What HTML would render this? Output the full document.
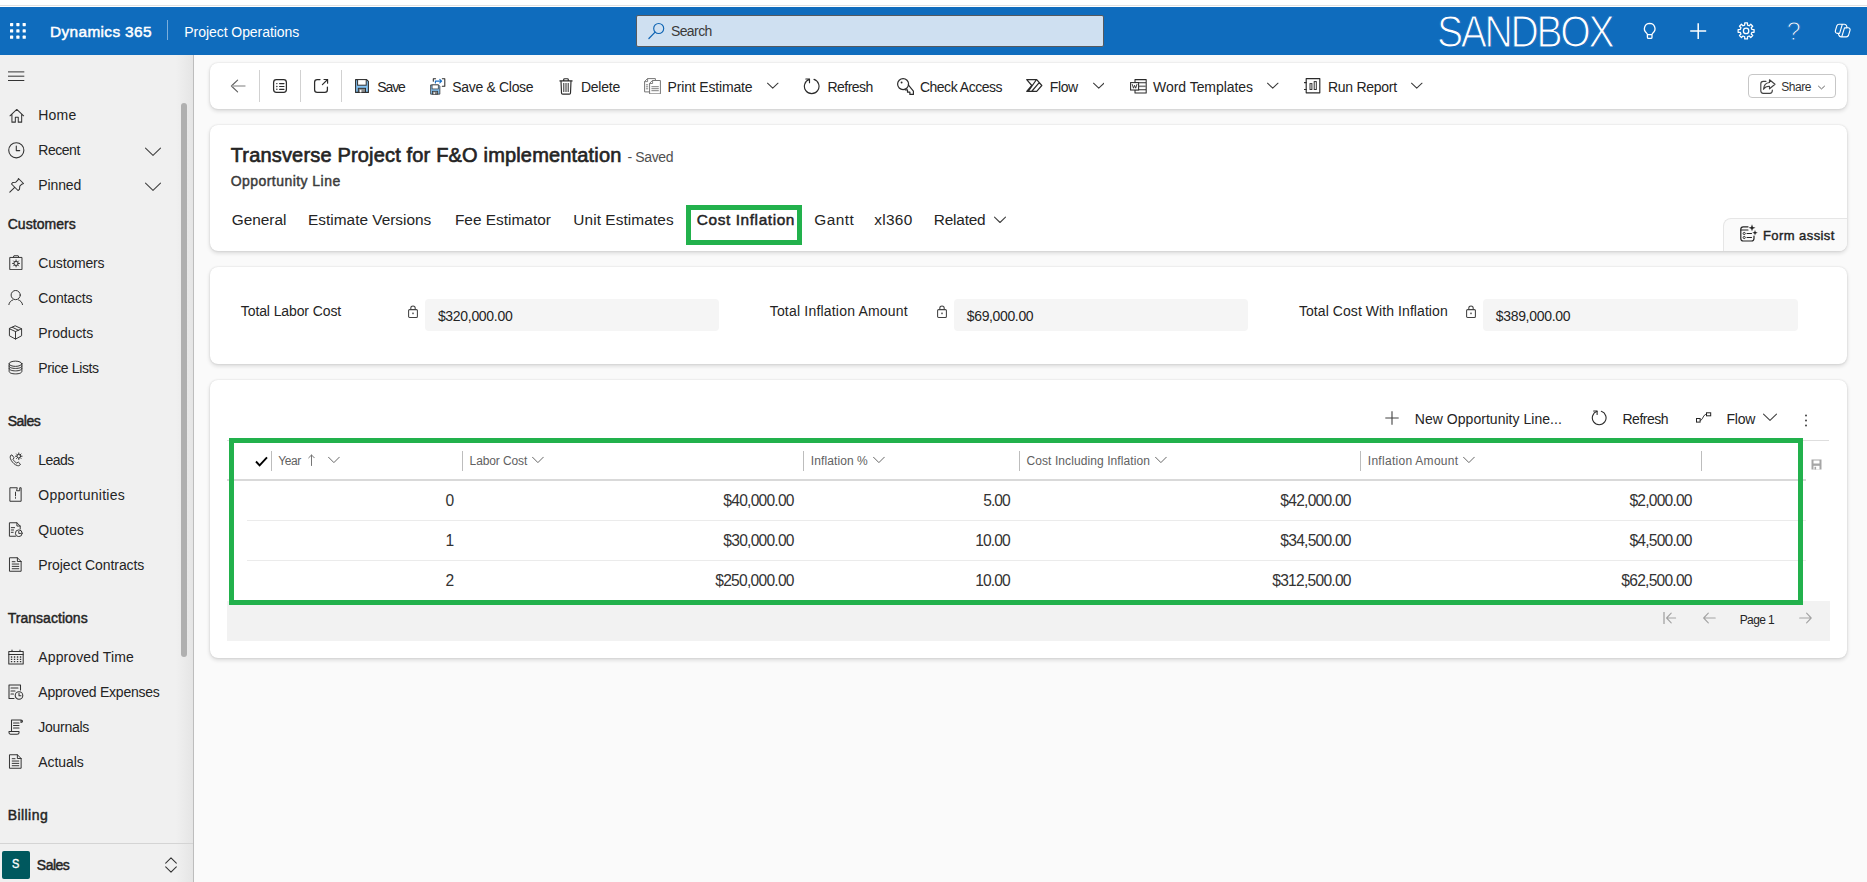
<!DOCTYPE html>
<html lang="en"><head><meta charset="utf-8"><title>Opportunity Line: Transverse Project for F&amp;O implementation - Dynamics 365</title>
<style>
html,body{margin:0;padding:0}
body{width:1867px;height:882px;overflow:hidden;position:relative;background:#fafafa;font-family:"Liberation Sans", sans-serif;color:#242424}
#app{position:absolute;left:0;top:0;width:1867px;height:882px;overflow:hidden}
#app div,#app svg,#app span{position:absolute;box-sizing:border-box}
#app span{white-space:nowrap;line-height:20px;display:block}
.card{background:#fff;border-radius:8px;box-shadow:0 0 2px rgba(0,0,0,.12),0 2px 4px rgba(0,0,0,.14)}

</style></head><body><div id="app">
<div style="left:0px;top:0px;width:1867px;height:7px;background:#ffffff;"></div>
<div style="left:0px;top:5px;width:1867px;height:1px;background:#e0e0e0;"></div>
<div style="left:0px;top:7px;width:1867px;height:48px;background:#0f6cbd;"></div>
<div style="left:167px;top:20px;width:1px;height:20px;background:rgba(255,255,255,.45);"></div>
<div style="left:636px;top:15px;width:468px;height:32px;background:#cfe0f1;border:1px solid #55595e;border-radius:2px;"></div>
<div style="left:0px;top:55px;width:194px;height:827px;background:linear-gradient(to right,#f0f0f0 0,#f0f0f0 176px,#e5e5e5 193px);border-right:1px solid #bdbdbd;"></div>
<div style="left:181px;top:103px;width:6px;height:554px;background:#b0b0b0;border-radius:3px;"></div>
<div style="left:0px;top:843px;width:193px;height:39px;background:linear-gradient(to right,#f0f0f0 0,#f0f0f0 176px,#e5e5e5 193px);border-top:1px solid #d4d4d4;"></div>
<div style="left:2px;top:851px;width:28px;height:28px;background:#00585e;border-radius:2px;"></div>
<div class="card" style="left:210px;top:63px;width:1637px;height:46px"></div>
<div class="card" style="left:210px;top:125px;width:1637px;height:126px"></div>
<div class="card" style="left:210px;top:267px;width:1637px;height:97px"></div>
<div class="card" style="left:210px;top:380px;width:1637px;height:278px"></div>
<div style="left:259px;top:70px;width:1px;height:32px;background:#d1d1d1;"></div>
<div style="left:300px;top:70px;width:1px;height:32px;background:#d1d1d1;"></div>
<div style="left:341px;top:70px;width:1px;height:32px;background:#d1d1d1;"></div>
<div style="left:1748px;top:74px;width:88px;height:24px;background:#fff;border:1px solid #c7c7c7;border-radius:4px;"></div>
<div style="left:686px;top:205px;width:116px;height:40px;background:transparent;border:5px solid #22b14c;"></div>
<div style="left:1723px;top:218px;width:124px;height:33px;background:#fafafa;border:1px solid #e6e6e6;border-right:none;border-bottom:none;border-radius:8px 0 8px 0;"></div>
<div style="left:425px;top:299px;width:294px;height:32px;background:#f5f5f5;border-radius:4px;"></div>
<div style="left:954px;top:299px;width:294px;height:32px;background:#f5f5f5;border-radius:4px;"></div>
<div style="left:1483px;top:299px;width:315px;height:32px;background:#f5f5f5;border-radius:4px;"></div>
<div style="left:227px;top:440px;width:1602px;height:1px;background:#dedede;"></div>
<div style="left:227px;top:479px;width:1579px;height:2px;background:#d9d9d9;"></div>
<div style="left:247px;top:519.5px;width:1559px;height:1.5px;background:#ebebeb;"></div>
<div style="left:247px;top:559.5px;width:1559px;height:1.5px;background:#ebebeb;"></div>
<div style="left:227px;top:601px;width:1603px;height:40px;background:#f2f2f2;"></div>
<div style="left:271px;top:451px;width:1px;height:20px;background:#bdbdbd;"></div>
<div style="left:462px;top:451px;width:1px;height:20px;background:#bdbdbd;"></div>
<div style="left:803px;top:451px;width:1px;height:20px;background:#bdbdbd;"></div>
<div style="left:1019px;top:451px;width:1px;height:20px;background:#bdbdbd;"></div>
<div style="left:1360px;top:451px;width:1px;height:20px;background:#bdbdbd;"></div>
<div style="left:1701px;top:451px;width:1px;height:20px;background:#bdbdbd;"></div>
<div style="left:229px;top:438px;width:1574px;height:167px;background:transparent;border:5px solid #22b14c;"></div>
<svg style="left:10px;top:23px;" width="16" height="16" viewBox="0 0 16 16" fill="none"><rect x="0.0" y="0.0" width="3.2" height="3.2" rx=".6" fill="#fff"/><rect x="0.0" y="6.3" width="3.2" height="3.2" rx=".6" fill="#fff"/><rect x="0.0" y="12.6" width="3.2" height="3.2" rx=".6" fill="#fff"/><rect x="6.3" y="0.0" width="3.2" height="3.2" rx=".6" fill="#fff"/><rect x="6.3" y="6.3" width="3.2" height="3.2" rx=".6" fill="#fff"/><rect x="6.3" y="12.6" width="3.2" height="3.2" rx=".6" fill="#fff"/><rect x="12.6" y="0.0" width="3.2" height="3.2" rx=".6" fill="#fff"/><rect x="12.6" y="6.3" width="3.2" height="3.2" rx=".6" fill="#fff"/><rect x="12.6" y="12.6" width="3.2" height="3.2" rx=".6" fill="#fff"/></svg>
<svg style="left:647.8px;top:22px;" width="18" height="18" viewBox="0 0 18 18" fill="none"><circle cx="10.700" cy="6.500" r="5" stroke="#0f64b3" stroke-width="1.150"/><path d="M7.100 10.100 L0.900 16.500" stroke="#0f64b3" stroke-width="1.200" stroke-linecap="round"/></svg>
<svg style="left:1642px;top:22px;" width="16" height="18" viewBox="0 0 16 18" fill="none"><path d="M7.700 1.400 a5.300 5.300 0 0 0 -3.200 9.500 c.5.400 .8 1 .9 1.700 h4.600 c.100 -.700 .400 -1.300 .900 -1.700 a5.300 5.300 0 0 0 -3.200 -9.500 z M5.400 12.600 v2.600 c0 .700 .500 1.200 1.200 1.200 h2.200 c.700 0 1.200 -.500 1.200 -1.200 v-2.600" stroke="#fff" stroke-linecap="round" stroke-linejoin="round" stroke-width="1.300"/></svg>
<svg style="left:1690px;top:22.8px;" width="17" height="17" viewBox="0 0 17 17" fill="none"><path d="M8.200 0.200 V16 M0.200 8.100 H16.200" stroke="#fff" stroke-width="1.500"/></svg>
<svg style="left:1737px;top:22px;" width="18" height="18" viewBox="0 0 18 18" fill="none"><circle cx="9.100" cy="8.900" r="2.700" stroke="#fff" stroke-linecap="round" stroke-linejoin="round" stroke-width="1.300"/><path d="M7.71 0.92 L10.49 0.92 L10.50 3.07 L12.23 3.78 L13.76 2.27 L15.73 4.24 L14.22 5.77 L14.93 7.50 L17.08 7.51 L17.08 10.29 L14.93 10.30 L14.22 12.03 L15.73 13.56 L13.76 15.53 L12.23 14.02 L10.50 14.73 L10.49 16.88 L7.71 16.88 L7.70 14.73 L5.97 14.02 L4.44 15.53 L2.47 13.56 L3.98 12.03 L3.27 10.30 L1.12 10.29 L1.12 7.51 L3.27 7.50 L3.98 5.77 L2.47 4.24 L4.44 2.27 L5.97 3.78 L7.70 3.07 Z" stroke="#fff" stroke-linecap="round" stroke-linejoin="round" stroke-width="1.250"/></svg>
<svg style="left:1833px;top:23px;" width="18" height="16" viewBox="0 0 18 16" fill="none"><path d="M6 1.200 h5.400 c1 0 1.800 .600 2.100 1.500 l.600 2 h1 c1.400 0 2.300 1.300 1.900 2.600 l-1.500 5 c-.300 .900 -1.100 1.500 -2.100 1.500 H8 c-1 0 -1.800 -.600 -2.100 -1.500 l-.600 -2 h-1 c-1.400 0 -2.300 -1.300 -1.900 -2.600 l1.500 -5 c.300 -.900 1.100 -1.500 2.100 -1.500 z M9.300 1.400 L6.600 10.400 h-1.400 M8.800 13.600 l2.700 -8.800 h2.500" stroke="#fff" stroke-linecap="round" stroke-linejoin="round" stroke-width="1.150"/></svg>
<svg style="left:8px;top:71px;" width="17" height="11" viewBox="0 0 17 11" fill="none"><path d="M0 0.900h16.300M0 5.200h16.300M0 9.500h16.300" stroke="#333" stroke-width="1"/></svg>
<svg style="left:9.0px;top:107.5px;" width="15.6" height="15.6" viewBox="0 0 16 16" fill="none"><path d="M1 8 L8 1.500 L15 8 M3 6.500 V14.500 H6.500 V9.500 H9.500 V14.500 H13 V6.500" stroke="#333" stroke-width="1.05" stroke-linejoin="round" stroke-linecap="round"/></svg>
<svg style="left:8.2px;top:142.0px;" width="16.6" height="16.6" viewBox="0 0 16 16" fill="none"><circle cx="8" cy="8" r="7.300" stroke="#333" stroke-width="1.05" stroke-linejoin="round" stroke-linecap="round"/><path d="M8 3.800 V8.300 H11.300" stroke="#333" stroke-width="1.05" stroke-linejoin="round" stroke-linecap="round"/></svg>
<svg style="left:8.6px;top:177.1px;" width="16" height="16" viewBox="0 0 16 16" fill="none"><path d="M9.500 1.500 L14.500 6.500 L12.800 7.200 L10.800 9.200 L10.500 12.300 L9 13.500 L2.500 7 L3.700 5.500 L6.800 5.200 L8.800 3.200 Z M5.700 10.300 L0.800 15.200" stroke="#333" stroke-width="1.05" stroke-linejoin="round" stroke-linecap="round"/></svg>
<svg style="left:8.4px;top:254.9px;" width="15" height="15" viewBox="0 0 16 16" fill="none"><rect x="2.300" y="2.600" width="12.600" height="13" stroke="#333" stroke-width="1.05" stroke-linejoin="round" stroke-linecap="round"/><path d="M5.600 2.600 L6.300 0.800 H10.900 L11.600 2.600" stroke="#333" stroke-width="1.05" stroke-linejoin="round" stroke-linecap="round"/><circle cx="8.600" cy="9" r="2.300" stroke="#333" stroke-width="1.05" stroke-linejoin="round" stroke-linecap="round"/><path d="M8.600 5.300v1.400M8.600 11.300v1.400M4.900 9h1.400M10.900 9h1.400M6 6.400l1 1M10.200 10.600l1 1M11.200 6.400l-1 1M7 10.600l-1 1" stroke="#333" stroke-width="1.05" stroke-linejoin="round" stroke-linecap="round"/></svg>
<svg style="left:8.4px;top:289.90000000000003px;" width="15" height="15" viewBox="0 0 16 16" fill="none"><circle cx="8.200" cy="5.400" r="4.900" stroke="#333" stroke-width="1.05" stroke-linejoin="round" stroke-linecap="round"/><path d="M0.800 16 C1.300 12.800 3.300 11.200 5.200 10.600 M11.200 10.600 C13.100 11.200 15.100 12.800 15.600 16" stroke="#333" stroke-width="1.05" stroke-linejoin="round" stroke-linecap="round"/></svg>
<svg style="left:8.4px;top:324.90000000000003px;" width="15" height="15" viewBox="0 0 16 16" fill="none"><path d="M8 1 L14.500 4 V11.500 L8 15 L1.500 11.500 V4 Z M1.500 4 L8 7 L14.500 4 M8 7 V15 M4.700 2.500 L11.200 5.600" stroke="#333" stroke-width="1.05" stroke-linejoin="round" stroke-linecap="round"/></svg>
<svg style="left:8.4px;top:359.90000000000003px;" width="15" height="15" viewBox="0 0 16 16" fill="none"><ellipse cx="8" cy="4" rx="6.800" ry="2.800" stroke="#333" stroke-width="1.05" stroke-linejoin="round" stroke-linecap="round"/><path d="M1.200 4 V6.200 C1.200 8 4 9 8 9 C12 9 14.800 8 14.800 6.200 V4 M1.200 8.800 C1.200 10.600 4 11.600 8 11.600 C12 11.600 14.800 10.600 14.800 8.800 M1.200 6.200 V12 C1.200 13.800 4 14.800 8 14.800 C12 14.800 14.800 13.800 14.800 12 V6.200" stroke="#333" stroke-width="1.05" stroke-linejoin="round" stroke-linecap="round"/></svg>
<svg style="left:8.4px;top:451.90000000000003px;" width="15" height="15" viewBox="0 0 16 16" fill="none"><path d="M3 3.500 C2 4.500 2 6.500 3.500 9 C5 11.500 7.500 13.800 10 14.500 C11.500 15 12.800 14.300 13.300 13 L11 10.800 L9.300 11.800 C8 11.200 6 9.300 5.300 7.800 L6.500 6.200 L4.500 3.500 Z" stroke="#333" stroke-width="1.05" stroke-linejoin="round" stroke-linecap="round"/><circle cx="11.500" cy="4.500" r="1.900" stroke="#333" stroke-width="1.05" stroke-linejoin="round" stroke-linecap="round"/><path d="M11.500 1v1.200M11.500 6.800V8M8 4.500h1.200M13.800 4.500H15M9.100 2.100l.8.800M13.100 6.100l.8.800M13.900 2.100l-.8.800M9.900 6.100l-.8.800" stroke="#333" stroke-width="1.05" stroke-linejoin="round" stroke-linecap="round"/></svg>
<svg style="left:8.4px;top:486.90000000000003px;" width="15" height="15" viewBox="0 0 16 16" fill="none"><path d="M9.500 0.800 H2 V15.200 H14 V0.800 H12.500 V4 H9.500 Z M8 5.500 V9.500 M8 11.300 V12" stroke="#333" stroke-width="1.05" stroke-linejoin="round" stroke-linecap="round"/></svg>
<svg style="left:8.4px;top:521.9000000000001px;" width="15" height="15" viewBox="0 0 16 16" fill="none"><path d="M8 15.200 H1.500 V0.800 H9.500 L13 4.300 V7.500 M9.500 0.800 V4.300 H13 M3.500 6 H7 M3.500 8.500 H6 M3.500 11 H5.500" stroke="#333" stroke-width="1.05" stroke-linejoin="round" stroke-linecap="round"/><circle cx="11.500" cy="12" r="3.600" stroke="#333" stroke-width="1.05" stroke-linejoin="round" stroke-linecap="round"/><path d="M11.500 10v2.200h1.800" stroke="#333" stroke-width="1.05" stroke-linejoin="round" stroke-linecap="round"/></svg>
<svg style="left:8.4px;top:556.9000000000001px;" width="15" height="15" viewBox="0 0 16 16" fill="none"><path d="M2 0.800 H10 L14 4.800 V15.200 H2 Z M10 0.800 V4.800 H14 M4.500 7.500 H11.500 M4.500 10 H11.500 M4.500 12.500 H11.500 M4.500 5 H7.500" stroke="#333" stroke-width="1.05" stroke-linejoin="round" stroke-linecap="round"/></svg>
<svg style="left:8.0px;top:648.7px;" width="16" height="16" viewBox="0 0 16 16" fill="none"><rect x="0.800" y="2.500" width="14.400" height="12.500" stroke="#333" stroke-width="1.05" stroke-linejoin="round" stroke-linecap="round"/><path d="M0.800 5.500 H15.200 M4 1 V2.500 M12 1 V2.500" stroke="#333" stroke-width="1.05" stroke-linejoin="round" stroke-linecap="round"/><path d="M3.500 8h.1M6.500 8h.1M9.500 8h.1M12.500 8h.1M3.500 10.300h.1M6.500 10.300h.1M9.500 10.300h.1M12.500 10.300h.1M3.500 12.600h.1M6.500 12.600h.1M9.500 12.600h.1M12.500 12.600h.1" stroke="#333" stroke-width="1.300" stroke-linecap="square"/></svg>
<svg style="left:8.0px;top:683.7px;" width="16" height="16" viewBox="0 0 16 16" fill="none"><path d="M12.500 6 V1 H1 V14.500 H6 M3 4 H10 M3 7 H7 M3 10 H5.500" stroke="#333" stroke-width="1.05" stroke-linejoin="round" stroke-linecap="round"/><circle cx="11" cy="11.500" r="3.800" stroke="#333" stroke-width="1.05" stroke-linejoin="round" stroke-linecap="round"/><path d="M11 9.300v2.400h2" stroke="#333" stroke-width="1.05" stroke-linejoin="round" stroke-linecap="round"/></svg>
<svg style="left:8.0px;top:718.7px;" width="16" height="16" viewBox="0 0 16 16" fill="none"><path d="M13 3.500 V1 H3.500 V12.500 M1 12.500 H11 V14 C11 15.500 8.500 15.500 2.500 15.200 C1 15.200 1 14 1 12.500 Z M13 1 C15 1 15 3.500 13 3.500 M5.500 4 H11 M5.500 6.500 H11 M5.500 9 H11" stroke="#333" stroke-width="1.05" stroke-linejoin="round" stroke-linecap="round"/></svg>
<svg style="left:8.4px;top:753.9000000000001px;" width="15" height="15" viewBox="0 0 16 16" fill="none"><path d="M2 0.800 H10 L14 4.800 V15.200 H2 Z M10 0.800 V4.800 H14 M4.500 7.500 H11.500 M4.500 10 H11.500 M4.500 12.500 H11.500 M4.500 5 H7.500" stroke="#333" stroke-width="1.05" stroke-linejoin="round" stroke-linecap="round"/></svg>
<svg style="left:145px;top:146.5px;" width="16" height="10" viewBox="0 0 16 10" fill="none"><path d="M0.5 1.200 L8.0 8.3 L15.5 1.200" stroke="#424242" stroke-width="1.1" stroke-linecap="round" stroke-linejoin="round"/></svg>
<svg style="left:145px;top:181.5px;" width="16" height="10" viewBox="0 0 16 10" fill="none"><path d="M0.5 1.200 L8.0 8.3 L15.5 1.200" stroke="#424242" stroke-width="1.1" stroke-linecap="round" stroke-linejoin="round"/></svg>
<svg style="left:165px;top:857px;" width="12" height="16" viewBox="0 0 12 16" fill="none"><path d="M0.700 6.100 L6 0.800 L11.300 6.100 M0.700 9.900 L6 15.200 L11.300 9.900" stroke="#333" stroke-width="1.050" stroke-linejoin="round" stroke-linecap="round"/></svg>
<svg style="left:230px;top:79px;" width="16" height="14" viewBox="0 0 16 14" fill="none"><path d="M7.6 1.2 L1.4 7 L7.6 12.8" stroke="#5f5f5f" stroke-width="1.15" stroke-linecap="round" stroke-linejoin="round" /><path d="M2 7 H15" stroke="#a9a9a9" stroke-width="1.3" stroke-linecap="round" stroke-linejoin="round" /></svg>
<svg style="left:272px;top:78px;" width="16" height="16" viewBox="0 0 16 16" fill="none"><rect x="1.600" y="1.600" width="12.800" height="12.800" rx="2.800" stroke="#2b2b2b" stroke-width="1.250"/><path d="M4.800 5.600h.1M4.800 8.500h.1M4.800 11.300h.1" stroke="#2b2b2b" stroke-width="1.4" stroke-linecap="round" stroke-linejoin="round" /><path d="M7.600 5.600H12M7.600 8.500H12M7.600 11.300H12" stroke="#2b2b2b" stroke-width="1.15" stroke-linecap="round" stroke-linejoin="round" /></svg>
<svg style="left:313px;top:78px;" width="16" height="16" viewBox="0 0 16 16" fill="none"><path d="M7 1.600 H4.200 C2.600 1.600 1.600 2.600 1.600 4.200 V11.800 C1.600 13.400 2.600 14.400 4.200 14.400 H11.800 C13.400 14.400 14.400 13.400 14.400 11.800 V9" stroke="#2b2b2b" stroke-width="1.25" stroke-linecap="round" stroke-linejoin="round" /><path d="M11 1.500 H14.600 V5.200 M14.600 1.500 L9.400 6.700" stroke="#2b2b2b" stroke-width="1.15" stroke-linecap="round" stroke-linejoin="round" /></svg>
<svg style="left:355px;top:79px;" width="14" height="14" viewBox="0 0 14 14" fill="none"><path d="M0.600 0.600 H11.600 L13.400 2.400 V13.400 H0.600 Z" fill="#85c4f5" stroke="#2f2f2f" stroke-width="1.100" stroke-linejoin="round"/><rect x="2.600" y="0.600" width="8.600" height="5.600" fill="#fff" stroke="#2f2f2f" stroke-width="1"/><rect x="3.300" y="9.300" width="7.200" height="4.100" fill="#8a8a8a" stroke="#2f2f2f" stroke-width="1"/><rect x="4.800" y="10.800" width="1.600" height="2.600" fill="#fff"/></svg>
<svg style="left:430px;top:77.5px;" width="16" height="17" viewBox="0 0 16 17" fill="none"><g transform="translate(0.200,6.500) scale(.72)"><path d="M0.600 0.600 H11.600 L13.400 2.400 V13.400 H0.600 Z" fill="#85c4f5" stroke="#2f2f2f" stroke-width="1.100" stroke-linejoin="round"/><rect x="2.600" y="0.600" width="8.600" height="5.600" fill="#fff" stroke="#2f2f2f" stroke-width="1"/><rect x="3.300" y="9.300" width="7.200" height="4.100" fill="#8a8a8a" stroke="#2f2f2f" stroke-width="1"/><rect x="4.800" y="10.800" width="1.600" height="2.600" fill="#fff"/></g><path d="M3.300 3.200 V0.800 H5.600 M12.300 0.800 H14.800 V8.300 H12.300" stroke="#2b2b2b" stroke-width="1.05" stroke-linecap="round" stroke-linejoin="round" fill="none"/><path d="M5.400 4.900 V3.100 H11.600 M9.800 1.400 L11.700 3.100 L9.800 4.800" stroke="#1a6fc4" stroke-width="1.1" stroke-linecap="round" stroke-linejoin="round" /></svg>
<svg style="left:558.5px;top:77.5px;" width="14" height="17" viewBox="0 0 14 17" fill="none"><path d="M0.900 2.900 H13.100 M4.700 2.900 V1.600 C4.700 1 5.100 0.700 5.700 0.700 H8.300 C8.900 0.700 9.300 1 9.300 1.600 V2.900 M2 2.900 L2.500 14.900 C2.500 15.700 3 16.100 3.700 16.100 H10.300 C11 16.100 11.500 15.700 11.500 14.900 L12 2.900" stroke="#2b2b2b" stroke-width="1.15" stroke-linecap="round" stroke-linejoin="round" /><path d="M4.800 5.400 V13.600 M7 5.400 V13.600 M9.200 5.400 V13.600" stroke="#2b2b2b" stroke-width="1" stroke-linecap="round" stroke-linejoin="round" /></svg>
<svg style="left:643.5px;top:77.8px;" width="17" height="16.5" viewBox="0 0 17 16.5" fill="none"><path d="M0.600 3.500 L3.500 0.600 H11.400 V13.900 H0.600 Z" fill="#fff" stroke="#767676" stroke-width="1"/><path d="M0.800 3.600 H3.600 V0.800" stroke="#767676" stroke-width="0.9" stroke-linecap="round" stroke-linejoin="round" /><path d="M2.300 6.800h1.500M2.300 8.800h1.500M2.300 10.800h1.500" stroke="#767676" stroke-width="0.9" stroke-linecap="round" stroke-linejoin="round" /><path d="M5.600 5.300 L8.400 2.500 H16.400 V15.900 H5.600 Z" fill="#fff" stroke="#767676" stroke-width="1"/><path d="M5.800 5.500 H8.600 V2.700" stroke="#767676" stroke-width="0.9" stroke-linecap="round" stroke-linejoin="round" /><path d="M7.800 8.700 H14.400 M7.800 10.700 H14.400 M7.800 12.700 H14.400" stroke="#767676" stroke-width="0.95" stroke-linecap="round" stroke-linejoin="round" /></svg>
<svg style="left:767px;top:82.2px;" width="11.5" height="7.9" viewBox="0 0 11.5 7.9" fill="none"><path d="M0.5 1.200 L5.75 6.2 L11.0 1.200" stroke="#3a3a3a" stroke-width="1.05" stroke-linecap="round" stroke-linejoin="round"/></svg>
<svg style="left:802.8px;top:77.5px;" width="17" height="17" viewBox="-0.2 -0.3 17 17" fill="none"><path d="M10.800 1.100 A7.300 7.300 0 1 1 6.200 1.100" stroke="#2b2b2b" stroke-width="1.15" stroke-linecap="round" stroke-linejoin="round" /><path d="M2.600 0.700 H6.300 V4.400" stroke="#2b2b2b" stroke-width="1.15" stroke-linecap="round" stroke-linejoin="round" /></svg>
<svg style="left:896.5px;top:77.5px;" width="17" height="17" viewBox="0 0 17 17" fill="none"><circle cx="6.100" cy="6.100" r="5.500" stroke="#2b2b2b" stroke-width="1.200"/><circle cx="4.600" cy="4.500" r=".95" fill="#2b2b2b"/><path d="M11.300 6.800 L16.400 13.200 V16.400 H12.900 V14.200 H10.500 V11.900 H8.300" stroke="#2b2b2b" stroke-width="1.2" stroke-linecap="round" stroke-linejoin="round" /></svg>
<svg style="left:1025.8px;top:79px;" width="17" height="13" viewBox="0 0 17 13" fill="none"><path d="M0.700 0.700 H10.700 L15.800 6.500 L10.700 12.300 H0.700 L5.800 6.500 Z M10.200 1 L2.600 11.800 M13 3.800 L6 12" stroke="#2b2b2b" stroke-width="1.2" stroke-linecap="round" stroke-linejoin="round" /></svg>
<svg style="left:1092.6px;top:82.2px;" width="11.5" height="7.9" viewBox="0 0 11.5 7.9" fill="none"><path d="M0.5 1.200 L5.75 6.2 L11.0 1.200" stroke="#3a3a3a" stroke-width="1.05" stroke-linecap="round" stroke-linejoin="round"/></svg>
<svg style="left:1129.5px;top:78.7px;" width="17" height="15" viewBox="0 0 17 15" fill="none"><path d="M5 0.600 H16.200 V14 H5 Z M5 3.700 H16.200 M5 10.800 H16.200" stroke="#2b2b2b" stroke-width="1.05" stroke-linecap="round" stroke-linejoin="round" /><path d="M9 7.300 H16" stroke="#7a7a7a" stroke-width="1.600"/><rect x="0.600" y="3.600" width="8" height="7.400" fill="#fff" stroke="#2b2b2b" stroke-width="1.050"/><path d="M2.300 5.500 L3.500 9.200 L4.600 6.300 L5.700 9.200 L6.900 5.500" stroke="#2b2b2b" stroke-width="0.9" stroke-linecap="round" stroke-linejoin="round" /></svg>
<svg style="left:1267px;top:82.2px;" width="11.5" height="7.9" viewBox="0 0 11.5 7.9" fill="none"><path d="M0.5 1.200 L5.75 6.2 L11.0 1.200" stroke="#3a3a3a" stroke-width="1.05" stroke-linecap="round" stroke-linejoin="round"/></svg>
<svg style="left:1304px;top:77.8px;" width="17" height="16" viewBox="0 0 17 16" fill="none"><path d="M2.200 0.600 H15.800 V14.800 H2.200 Z" stroke="#2b2b2b" stroke-width="1.15" stroke-linecap="round" stroke-linejoin="round" /><path d="M0.400 4.600 H2.200 M0.400 11.500 H2.200" stroke="#2b2b2b" stroke-width="1.1" stroke-linecap="round" stroke-linejoin="round" /><rect x="6" y="5.600" width="1.900" height="5.900" stroke="#2b2b2b" stroke-width=".95"/><rect x="10.200" y="3.600" width="2.100" height="7.900" stroke="#2b2b2b" stroke-width=".95"/></svg>
<svg style="left:1411.3px;top:82.2px;" width="11.5" height="7.9" viewBox="0 0 11.5 7.9" fill="none"><path d="M0.5 1.200 L5.75 6.2 L11.0 1.200" stroke="#3a3a3a" stroke-width="1.05" stroke-linecap="round" stroke-linejoin="round"/></svg>
<svg style="left:1759.5px;top:78.5px;" width="16" height="15" viewBox="0 0 16 15" fill="none"><path d="M6 2.300 H3.300 C1.800 2.300 0.800 3.300 0.800 4.800 V11.800 C0.800 13.300 1.800 14.300 3.300 14.300 H9.800 C11.300 14.300 12.300 13.300 12.300 11.800 V11" stroke="#424242" stroke-width="1.15" stroke-linecap="round" stroke-linejoin="round" /><path d="M9.500 0.800 L15 5.300 L9.500 9.800 V7.300 C6.500 7.200 4.800 8.200 3.500 10.300 C3.800 6.500 5.800 3.800 9.500 3.500 Z" stroke="#424242" stroke-width="1.15" stroke-linecap="round" stroke-linejoin="round" /></svg>
<svg style="left:1817.7px;top:84.7px;" width="7" height="5.6" viewBox="0 0 7 5.6" fill="none"><path d="M0.5 1.200 L3.5 3.9 L6.5 1.200" stroke="#555" stroke-width="0.9" stroke-linecap="round" stroke-linejoin="round"/></svg>
<svg style="left:994.4px;top:215.9px;" width="12" height="8.2" viewBox="0 0 12 8.2" fill="none"><path d="M0.5 1.200 L6.0 6.5 L11.5 1.200" stroke="#424242" stroke-width="1.1" stroke-linecap="round" stroke-linejoin="round"/></svg>
<svg style="left:1739.5px;top:223.7px;" width="18" height="18" viewBox="0 0 18 18" fill="none"><path d="M8 2.800 H3.300 C1.800 2.800 0.800 3.800 0.800 5.300 V14.500 C0.800 16 1.800 17 3.300 17 H11.500 C13 17 14 16 14 14.500 V12" stroke="#242424" stroke-width="1.200" stroke-linecap="round"/><circle cx="4.200" cy="9.500" r="1.100" stroke="#242424" stroke-width=".9"/><circle cx="4.200" cy="13.500" r="1.100" stroke="#242424" stroke-width=".9"/><path d="M7 9.500 H11.500 M7 13.500 H11.500 M1 6 H8" stroke="#242424" stroke-width="1.100" stroke-linecap="round"/><path d="M12 0.300 L12.900 2.900 L15.500 3.800 L12.900 4.700 L12 7.300 L11.100 4.700 L8.500 3.800 L11.100 2.900 Z" fill="#242424"/><path d="M15 6 L15.700 8 L17.700 8.700 L15.700 9.400 L15 11.400 L14.300 9.400 L12.300 8.700 L14.300 8 Z" fill="#242424"/></svg>
<svg style="left:408px;top:304.8px;" width="10" height="13" viewBox="0 0 10 13" fill="none"><rect x="0.600" y="4.600" width="8.800" height="7.800" rx="1" stroke="#424242" stroke-width="1.050"/><path d="M2.800 4.600 V3 C2.800 0.200 7.200 0.200 7.200 3 V4.600" stroke="#424242" stroke-width="1.050"/><rect x="4.300" y="7.600" width="1.400" height="1.600" fill="#424242"/></svg>
<svg style="left:936.8px;top:304.8px;" width="10" height="13" viewBox="0 0 10 13" fill="none"><rect x="0.600" y="4.600" width="8.800" height="7.800" rx="1" stroke="#424242" stroke-width="1.050"/><path d="M2.800 4.600 V3 C2.800 0.200 7.200 0.200 7.200 3 V4.600" stroke="#424242" stroke-width="1.050"/><rect x="4.300" y="7.600" width="1.400" height="1.600" fill="#424242"/></svg>
<svg style="left:1465.8px;top:304.8px;" width="10" height="13" viewBox="0 0 10 13" fill="none"><rect x="0.600" y="4.600" width="8.800" height="7.800" rx="1" stroke="#424242" stroke-width="1.050"/><path d="M2.800 4.600 V3 C2.800 0.200 7.200 0.200 7.200 3 V4.600" stroke="#424242" stroke-width="1.050"/><rect x="4.300" y="7.600" width="1.400" height="1.600" fill="#424242"/></svg>
<svg style="left:1385px;top:411px;" width="14" height="14" viewBox="0 0 14 14" fill="none"><path d="M7 0.300 V13.700 M0.300 7 H13.700" stroke="#424242" stroke-width="1.100"/></svg>
<svg style="left:1591px;top:409.8px;" width="16" height="16" viewBox="-0.2 -0.3 17 17" fill="none"><path d="M10.800 1.100 A7.300 7.300 0 1 1 6.200 1.100" stroke="#2b2b2b" stroke-width="1.15" stroke-linecap="round" stroke-linejoin="round" /><path d="M2.600 0.700 H6.300 V4.400" stroke="#2b2b2b" stroke-width="1.15" stroke-linecap="round" stroke-linejoin="round" /></svg>
<svg style="left:1695.5px;top:412px;" width="16" height="11" viewBox="0 0 16 11" fill="none"><rect x="0.500" y="6.500" width="3.600" height="3.600" stroke="#242424" stroke-width="1"/><rect x="10.500" y="0.800" width="4.200" height="3" stroke="#242424" stroke-width="1"/><path d="M4.100 8.300 C7 8.300 7 2.300 10.500 2.300" stroke="#242424" stroke-width="1"/></svg>
<svg style="left:1763px;top:413px;" width="14" height="9" viewBox="0 0 14 9" fill="none"><path d="M0.5 1.200 L7.0 7.3 L13.5 1.200" stroke="#424242" stroke-width="1.1" stroke-linecap="round" stroke-linejoin="round"/></svg>
<svg style="left:1804px;top:414px;" width="4" height="13" viewBox="0 0 4 13" fill="none"><circle cx="2" cy="1.500" r="1" fill="#424242"/><circle cx="2" cy="6.500" r="1" fill="#424242"/><circle cx="2" cy="11.500" r="1" fill="#424242"/></svg>
<svg style="left:255px;top:455.5px;" width="13" height="11" viewBox="0 0 13 11" fill="none"><path d="M1 5.500 L4.600 9.300 L12 1.300" stroke="#000" stroke-width="1.900" stroke-linejoin="miter"/></svg>
<svg style="left:308.3px;top:453.5px;" width="7" height="12" viewBox="0 0 7 12" fill="none"><path d="M3.500 11.500 V1 M0.700 3.800 L3.500 1 L6.300 3.800" stroke="#767676" stroke-width="1" stroke-linecap="round" stroke-linejoin="round"/></svg>
<svg style="left:328.4px;top:456.4px;" width="11.8" height="8.3" viewBox="0 0 11.8 8.3" fill="none"><path d="M0.5 1.200 L5.9 6.6 L11.3 1.200" stroke="#666" stroke-width="1" stroke-linecap="round" stroke-linejoin="round"/></svg>
<svg style="left:532.3px;top:456.4px;" width="11.8" height="8.3" viewBox="0 0 11.8 8.3" fill="none"><path d="M0.5 1.200 L5.9 6.6 L11.3 1.200" stroke="#666" stroke-width="1" stroke-linecap="round" stroke-linejoin="round"/></svg>
<svg style="left:873.2px;top:456.4px;" width="11.8" height="8.3" viewBox="0 0 11.8 8.3" fill="none"><path d="M0.5 1.200 L5.9 6.6 L11.3 1.200" stroke="#666" stroke-width="1" stroke-linecap="round" stroke-linejoin="round"/></svg>
<svg style="left:1155.2px;top:456.4px;" width="11.8" height="8.3" viewBox="0 0 11.8 8.3" fill="none"><path d="M0.5 1.200 L5.9 6.6 L11.3 1.200" stroke="#666" stroke-width="1" stroke-linecap="round" stroke-linejoin="round"/></svg>
<svg style="left:1463.3px;top:456.4px;" width="11.8" height="8.3" viewBox="0 0 11.8 8.3" fill="none"><path d="M0.5 1.200 L5.9 6.6 L11.3 1.200" stroke="#666" stroke-width="1" stroke-linecap="round" stroke-linejoin="round"/></svg>
<svg style="left:1811px;top:458.6px;" width="11" height="11" viewBox="0 0 11 11" fill="none"><path d="M0.500 0.500 H10.500 V10.500 H0.500 Z" fill="#a6a6a6"/><rect x="2.500" y="1.500" width="6" height="3" fill="#fff"/><rect x="2.500" y="6.800" width="6" height="3.700" fill="#fff"/><rect x="3.500" y="7.800" width="1.600" height="2.700" fill="#a6a6a6"/></svg>
<svg style="left:1662.5px;top:612px;" width="14" height="12" viewBox="0 0 14 12" fill="none"><path d="M1 0.600 V11.400" stroke="#a3a3a3" stroke-width="1.3" stroke-linecap="round" stroke-linejoin="round" /><path d="M8.200 1.200 L3.600 6 L8.200 10.800 M3.800 6 H12.600" stroke="#a3a3a3" stroke-width="1.1" stroke-linecap="round" stroke-linejoin="round" /></svg>
<svg style="left:1702.5px;top:612px;" width="14" height="12" viewBox="0 0 14 12" fill="none"><path d="M5.300 1.200 L0.700 6 L5.300 10.800 M0.900 6 H12.200" stroke="#a3a3a3" stroke-width="1.1" stroke-linecap="round" stroke-linejoin="round" /></svg>
<svg style="left:1798.5px;top:612px;" width="14" height="12" viewBox="0 0 14 12" fill="none"><path d="M7.600 1.200 L12.200 6 L7.600 10.800 M12 6 H0.700" stroke="#a3a3a3" stroke-width="1.1" stroke-linecap="round" stroke-linejoin="round" /></svg>
<span style="top:21.50px;font-size:15.4px;color:#fff;-webkit-text-stroke:0.49px #fff;letter-spacing:0.362px;left:50.00px;">Dynamics 365</span>
<span style="top:22.00px;font-size:14px;color:#fff;letter-spacing:-0.056px;left:184.30px;">Project Operations</span>
<span style="top:21.00px;font-size:14px;color:#3b3a39;letter-spacing:-0.572px;left:670.90px;">Search</span>
<span style="top:22.00px;font-size:43.5px;color:#fff;letter-spacing:-2.585px;left:1436.70px;-webkit-text-stroke:1.15px #0f6cbd;transform:scaleX(.9);transform-origin:0 0;">SANDBOX</span>
<span style="top:21.00px;font-size:25px;color:#fff;left:1786.70px;-webkit-text-stroke:.9px #0f6cbd;">?</span>
<span style="top:105.00px;font-size:14px;color:#242424;letter-spacing:0.214px;left:38.30px;">Home</span>
<span style="top:140.00px;font-size:14px;color:#242424;letter-spacing:-0.472px;left:38.30px;">Recent</span>
<span style="top:175.00px;font-size:14px;color:#242424;letter-spacing:-0.119px;left:38.30px;">Pinned</span>
<span style="top:253.00px;font-size:14px;color:#242424;letter-spacing:-0.173px;left:38.30px;">Customers</span>
<span style="top:288.00px;font-size:14px;color:#242424;letter-spacing:-0.136px;left:38.30px;">Contacts</span>
<span style="top:323.00px;font-size:14px;color:#242424;letter-spacing:-0.050px;left:38.30px;">Products</span>
<span style="top:358.00px;font-size:14px;color:#242424;letter-spacing:-0.388px;left:38.30px;">Price Lists</span>
<span style="top:450.00px;font-size:14px;color:#242424;letter-spacing:-0.539px;left:38.30px;">Leads</span>
<span style="top:485.00px;font-size:14px;color:#242424;letter-spacing:0.268px;left:38.30px;">Opportunities</span>
<span style="top:520.00px;font-size:14px;color:#242424;letter-spacing:0.072px;left:38.30px;">Quotes</span>
<span style="top:555.00px;font-size:14px;color:#242424;letter-spacing:-0.086px;left:38.30px;">Project Contracts</span>
<span style="top:647.00px;font-size:14px;color:#242424;letter-spacing:0.111px;left:38.30px;">Approved Time</span>
<span style="top:682.00px;font-size:14px;color:#242424;letter-spacing:-0.238px;left:38.30px;">Approved Expenses</span>
<span style="top:717.00px;font-size:14px;color:#242424;letter-spacing:-0.275px;left:38.30px;">Journals</span>
<span style="top:752.00px;font-size:14px;color:#242424;letter-spacing:-0.070px;left:38.30px;">Actuals</span>
<span style="top:214.00px;font-size:14px;color:#242424;-webkit-text-stroke:0.45px #242424;letter-spacing:0.039px;left:7.70px;">Customers</span>
<span style="top:411.00px;font-size:14px;color:#242424;-webkit-text-stroke:0.45px #242424;letter-spacing:-0.508px;left:7.70px;">Sales</span>
<span style="top:608.00px;font-size:14px;color:#242424;-webkit-text-stroke:0.45px #242424;letter-spacing:0.034px;left:7.70px;">Transactions</span>
<span style="top:805.00px;font-size:14px;color:#242424;-webkit-text-stroke:0.45px #242424;letter-spacing:0.440px;left:7.70px;">Billing</span>
<span style="top:854.00px;font-size:12.5px;color:#fff;-webkit-text-stroke:0.40px #fff;left:11.80px;transform:scaleX(.88);transform-origin:0 0;">S</span>
<span style="top:855.00px;font-size:14px;color:#242424;-webkit-text-stroke:0.45px #242424;letter-spacing:-0.508px;left:36.80px;">Sales</span>
<span style="top:77.00px;font-size:14px;color:#242424;letter-spacing:-1.141px;left:377.30px;">Save</span>
<span style="top:77.00px;font-size:14px;color:#242424;letter-spacing:-0.312px;left:452.20px;">Save &amp; Close</span>
<span style="top:77.00px;font-size:14px;color:#242424;letter-spacing:-0.214px;left:580.90px;">Delete</span>
<span style="top:77.00px;font-size:14px;color:#242424;letter-spacing:-0.165px;left:667.60px;">Print Estimate</span>
<span style="top:77.00px;font-size:14px;color:#242424;letter-spacing:-0.539px;left:827.50px;">Refresh</span>
<span style="top:77.00px;font-size:14px;color:#242424;letter-spacing:-0.485px;left:919.90px;">Check Access</span>
<span style="top:77.00px;font-size:14px;color:#242424;letter-spacing:-0.354px;left:1049.70px;">Flow</span>
<span style="top:77.00px;font-size:14px;color:#242424;letter-spacing:-0.049px;left:1153.10px;">Word Templates</span>
<span style="top:77.00px;font-size:14px;color:#242424;letter-spacing:-0.277px;left:1328.00px;">Run Report</span>
<span style="top:77.00px;font-size:12px;color:#333;letter-spacing:-0.433px;left:1781.20px;">Share</span>
<span style="top:145.00px;font-size:20px;color:#242424;-webkit-text-stroke:0.64px #242424;letter-spacing:0.171px;left:230.70px;">Transverse Project for F&amp;O implementation</span>
<span style="top:147.00px;font-size:14px;color:#505050;letter-spacing:-0.375px;left:627.50px;">- Saved</span>
<span style="top:171.00px;font-size:14px;color:#3b3b3b;-webkit-text-stroke:0.45px #3b3b3b;letter-spacing:0.451px;left:230.70px;">Opportunity Line</span>
<span style="top:209.50px;font-size:15.4px;color:#242424;letter-spacing:-0.028px;left:231.80px;">General</span>
<span style="top:209.50px;font-size:15.4px;color:#242424;left:308.10px;">Estimate Versions</span>
<span style="top:209.50px;font-size:15.4px;color:#242424;letter-spacing:0.017px;left:454.90px;">Fee Estimator</span>
<span style="top:209.50px;font-size:15.4px;color:#242424;letter-spacing:0.083px;left:573.30px;">Unit Estimates</span>
<span style="top:209.50px;font-size:15.4px;color:#242424;-webkit-text-stroke:0.49px #242424;letter-spacing:0.598px;left:696.80px;">Cost Inflation</span>
<span style="top:209.50px;font-size:15.4px;color:#242424;letter-spacing:0.486px;left:814.20px;">Gantt</span>
<span style="top:209.50px;font-size:15.4px;color:#242424;letter-spacing:0.301px;left:874.20px;">xl360</span>
<span style="top:209.50px;font-size:15.4px;color:#242424;letter-spacing:-0.177px;left:933.70px;">Related</span>
<span style="top:225.50px;font-size:13px;color:#242424;-webkit-text-stroke:0.42px #242424;letter-spacing:0.423px;left:1763.00px;">Form assist</span>
<span style="top:301.00px;font-size:14px;color:#242424;letter-spacing:-0.104px;left:240.80px;">Total Labor Cost</span>
<span style="top:306.00px;font-size:14px;color:#242424;letter-spacing:-0.306px;left:437.90px;">$320,000.00</span>
<span style="top:301.00px;font-size:14px;color:#242424;letter-spacing:0.196px;left:769.70px;">Total Inflation Amount</span>
<span style="top:306.00px;font-size:14px;color:#242424;letter-spacing:-0.364px;left:966.80px;">$69,000.00</span>
<span style="top:301.00px;font-size:14px;color:#242424;letter-spacing:0.072px;left:1298.90px;">Total Cost With Inflation</span>
<span style="top:306.00px;font-size:14px;color:#242424;letter-spacing:-0.306px;left:1495.70px;">$389,000.00</span>
<span style="top:409.00px;font-size:14px;color:#242424;letter-spacing:0.032px;left:1414.80px;">New Opportunity Line...</span>
<span style="top:409.00px;font-size:14px;color:#242424;letter-spacing:-0.505px;left:1622.50px;">Refresh</span>
<span style="top:409.00px;font-size:14px;color:#242424;letter-spacing:-0.254px;left:1726.50px;">Flow</span>
<span style="top:451.00px;font-size:12px;color:#616161;letter-spacing:-0.450px;left:278.30px;">Year</span>
<span style="top:451.00px;font-size:12px;color:#616161;letter-spacing:-0.111px;left:469.60px;">Labor Cost</span>
<span style="top:451.00px;font-size:12px;color:#616161;letter-spacing:0.095px;left:810.80px;">Inflation %</span>
<span style="top:451.00px;font-size:12px;color:#616161;letter-spacing:0.087px;left:1026.50px;">Cost Including Inflation</span>
<span style="top:451.00px;font-size:12px;color:#616161;letter-spacing:0.282px;left:1367.80px;">Inflation Amount</span>
<span style="top:490.50px;font-size:15.6px;color:#333;left:445.62px;">0</span>
<span style="top:490.50px;font-size:15.6px;color:#333;letter-spacing:-0.767px;left:723.36px;">$40,000.00</span>
<span style="top:490.50px;font-size:15.6px;color:#333;letter-spacing:-0.956px;left:983.21px;">5.00</span>
<span style="top:490.50px;font-size:15.6px;color:#333;letter-spacing:-0.767px;left:1280.36px;">$42,000.00</span>
<span style="top:490.50px;font-size:15.6px;color:#333;letter-spacing:-0.789px;left:1629.44px;">$2,000.00</span>
<span style="top:530.50px;font-size:15.6px;color:#333;left:445.62px;">1</span>
<span style="top:530.50px;font-size:15.6px;color:#333;letter-spacing:-0.767px;left:723.36px;">$30,000.00</span>
<span style="top:530.50px;font-size:15.6px;color:#333;letter-spacing:-0.865px;left:975.13px;">10.00</span>
<span style="top:530.50px;font-size:15.6px;color:#333;letter-spacing:-0.767px;left:1280.36px;">$34,500.00</span>
<span style="top:530.50px;font-size:15.6px;color:#333;letter-spacing:-0.789px;left:1629.44px;">$4,500.00</span>
<span style="top:570.50px;font-size:15.6px;color:#333;left:445.62px;">2</span>
<span style="top:570.50px;font-size:15.6px;color:#333;letter-spacing:-0.750px;left:715.28px;">$250,000.00</span>
<span style="top:570.50px;font-size:15.6px;color:#333;letter-spacing:-0.865px;left:975.13px;">10.00</span>
<span style="top:570.50px;font-size:15.6px;color:#333;letter-spacing:-0.750px;left:1272.28px;">$312,500.00</span>
<span style="top:570.50px;font-size:15.6px;color:#333;letter-spacing:-0.767px;left:1621.36px;">$62,500.00</span>
<span style="top:610.00px;font-size:12px;color:#242424;letter-spacing:-0.609px;left:1739.70px;">Page 1</span>
</div></body></html>
